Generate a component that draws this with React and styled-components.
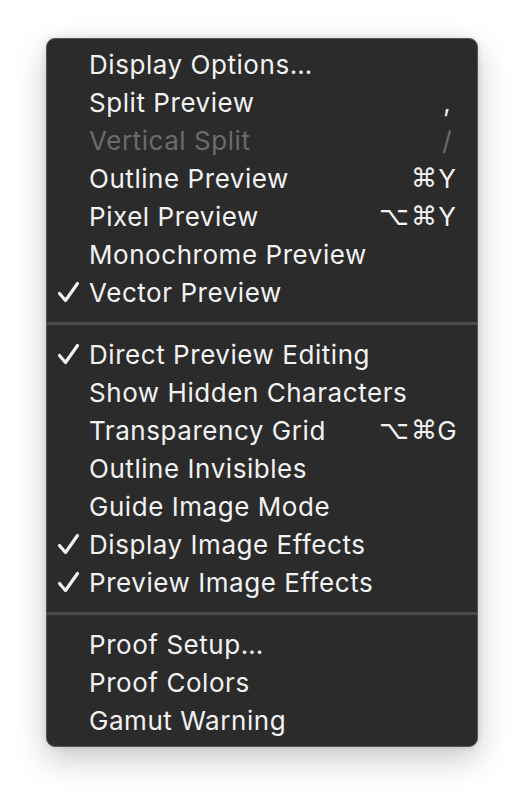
import React from "react";
import styled, { createGlobalStyle } from "styled-components";

const GlobalStyle = createGlobalStyle`
  html, body {
    margin: 0;
    padding: 0;
    background: #ffffff;
  }
  body {
    font-family: Inter, "Noto Sans", "DejaVu Sans", sans-serif;
  }
`;

const Page = styled.div`
  width: 524px;
  height: 802px;
  padding: 38px 0 0 46px;
  box-sizing: border-box;
`;

const Menu = styled.div`
  width: 432px;
  box-sizing: border-box;
  padding: 6px 0 7px;
  background: #2b2b2b;
  border: 1px solid #565656;
  border-radius: 9px;
  box-shadow: 0 12px 32px rgba(0, 0, 0, 0.22), 0 0 6px rgba(0, 0, 0, 0.12);
  display: flex;
  flex-direction: column;
`;

const Row = styled.div`
  height: 38px;
  display: flex;
  align-items: center;
  padding: 0 0 0 10px;
  color: ${(p) => (p.$disabled ? "#6b6b6b" : "#f2f2f2")};
  font-size: 26px;
  letter-spacing: 0.55px;
`;

const CheckCol = styled.span`
  width: 32px;
  height: 38px;
  display: flex;
  align-items: center;
  flex-shrink: 0;
`;

const Label = styled.span`
  flex: 1;
  white-space: nowrap;
`;

const Shortcut = styled.span`
  display: flex;
  align-items: center;
  margin-right: 20px;
`;

const Mods = styled.span`
  display: flex;
  gap: 2px;
  font-family: "DejaVu Sans", sans-serif;
  font-size: 26px;
  letter-spacing: 0;
`;

const Key = styled.span`
  width: 20px;
  text-align: center;
  letter-spacing: 0;
`;

const Separator = styled.div`
  height: 3px;
  background: #4b4b4b;
  margin: 11px 0 10px;
`;

const Check = () => (
  <svg width="23" height="22" viewBox="0 0 23 22">
    <path
      d="M2.5 12.5 L8.5 19.5 L20.5 2.5"
      fill="none"
      stroke="#f2f2f2"
      strokeWidth="3.2"
      strokeLinecap="round"
      strokeLinejoin="round"
    />
  </svg>
);

const groups = [
  [
    { label: "Display Options…" },
    { label: "Split Preview", key: "," },
    { label: "Vertical Split", key: "/", disabled: true },
    { label: "Outline Preview", mods: ["⌘"], key: "Y" },
    { label: "Pixel Preview", mods: ["⌥", "⌘"], key: "Y" },
    { label: "Monochrome Preview" },
    { label: "Vector Preview", checked: true },
  ],
  [
    { label: "Direct Preview Editing", checked: true },
    { label: "Show Hidden Characters" },
    { label: "Transparency Grid", mods: ["⌥", "⌘"], key: "G" },
    { label: "Outline Invisibles" },
    { label: "Guide Image Mode" },
    { label: "Display Image Effects", checked: true },
    { label: "Preview Image Effects", checked: true },
  ],
  [
    { label: "Proof Setup…" },
    { label: "Proof Colors" },
    { label: "Gamut Warning" },
  ],
];

export default function App() {
  return (
    <>
      <GlobalStyle />
      <Page>
        <Menu>
          {groups.map((items, gi) => (
            <React.Fragment key={gi}>
              {gi > 0 && <Separator />}
              {items.map((it) => (
                <Row key={it.label} $disabled={it.disabled}>
                  <CheckCol>{it.checked && <Check />}</CheckCol>
                  <Label>{it.label}</Label>
                  {it.key && (
                    <Shortcut>
                      {it.mods && (
                        <Mods>
                          {it.mods.map((m) => (
                            <span key={m}>{m}</span>
                          ))}
                        </Mods>
                      )}
                      <Key>{it.key}</Key>
                    </Shortcut>
                  )}
                </Row>
              ))}
            </React.Fragment>
          ))}
        </Menu>
      </Page>
    </>
  );
}
